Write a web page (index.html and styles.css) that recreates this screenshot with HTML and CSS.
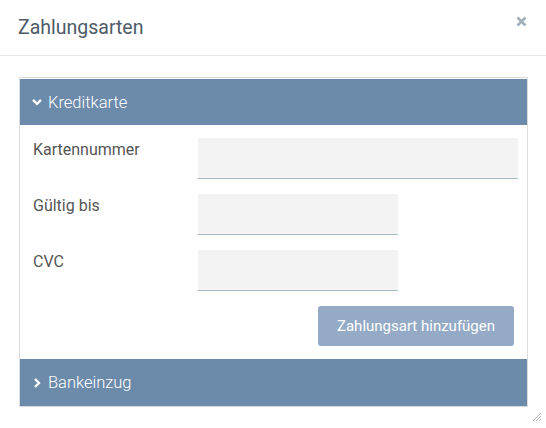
FILE: index.html
```html
<!DOCTYPE html>
<html lang="de">
<head>
  <meta charset="UTF-8">
  <title>Zahlungsarten</title>
  <link rel="stylesheet" href="styles.css">
</head>
<body>
  <div class="modal">
    <div class="modal-header">
      <h2>Zahlungsarten</h2>
      <svg class="close" width="11" height="11" viewBox="0 0 11 11"><path d="M1.5 1.5 L9.5 9.5 M9.5 1.5 L1.5 9.5" stroke="#a3afba" stroke-width="2.6"/></svg>
    </div>
    <div class="modal-body">
      <div class="accordion">
        <div class="acc-head">
          <svg class="chev" width="12" height="12" viewBox="0 0 12 12"><path d="M2 3.8 L6 7.8 L10 3.8" fill="none" stroke="#fff" stroke-width="2.4"/></svg>
          <span>Kreditkarte</span>
        </div>
        <div class="acc-content">
          <div class="row">
            <label>Kartennummer</label>
            <div class="field wide"></div>
          </div>
          <div class="row">
            <label>Gültig bis</label>
            <div class="field"></div>
          </div>
          <div class="row">
            <label>CVC</label>
            <div class="field"></div>
          </div>
          <div class="actions">
            <button class="btn">Zahlungsart hinzufügen</button>
          </div>
        </div>
        <div class="acc-head closed">
          <svg class="chev" width="12" height="12" viewBox="0 0 12 12"><path d="M4 2 L8 6 L4 10" fill="none" stroke="#fff" stroke-width="2.4"/></svg>
          <span>Bankeinzug</span>
        </div>
      </div>
    </div>
    <svg class="grip" width="10" height="10" viewBox="0 0 10 10">
      <path d="M9 1 L1 9 M9 4 L4 9 M9 7 L7 9" stroke="#b5b5b5" stroke-width="1"/>
    </svg>
  </div>
</body>
</html>
```

FILE: styles.css
```css
body {
  margin: 0;
  font-family: Roboto, "Liberation Sans", sans-serif;
  background: #fff;
}
.modal {
  width: 546px;
  height: 428px;
  position: relative;
}
.modal-header {
  height: 56px;
  border-bottom: 1px solid #e5e5e5;
  display: flex;
  justify-content: space-between;
  align-items: flex-start;
  box-sizing: border-box;
}
.modal-header h2 {
  margin: 16px 0 0 18px;
  font-size: 19.5px;
  font-weight: 400;
  color: #4d5b69;
}
.close {
  margin: 16px 19px 0 0;
}
.modal-body {
  padding: 21px 18px 0 19px;
}
.accordion {
  border: 1px solid #dcdcdc;
  padding-top: 1px;
}
.acc-head {
  height: 46px;
  background: #6c8bab;
  color: #fff;
  display: flex;
  align-items: center;
  padding-left: 11px;
  font-size: 16.5px;
  font-weight: 300;
}
.acc-head.closed {
  height: 47px;
}
.chev {
  margin-right: 5px;
}
.acc-content {
  padding: 13px 9px 13px 13px;
  display: flex;
  flex-direction: column;
  gap: 15px;
}
.row {
  display: flex;
}
.row label {
  width: 165px;
  font-size: 16px;
  color: #555;
  padding-top: 2px;
}
.field {
  width: 200px;
  height: 40px;
  background: #f3f3f3;
  border-bottom: 1px solid #a9bcc6;
}
.field.wide {
  width: 320px;
}
.actions {
  display: flex;
  justify-content: flex-end;
  padding-right: 4px;
}
.btn {
  width: 196px;
  height: 40px;
  border: none;
  border-radius: 3px;
  background: #94aac6;
  color: #fff;
  font-family: Roboto, "Liberation Sans", sans-serif;
  font-size: 15px;
}
.grip {
  position: absolute;
  right: 4px;
  bottom: 6px;
}
```
